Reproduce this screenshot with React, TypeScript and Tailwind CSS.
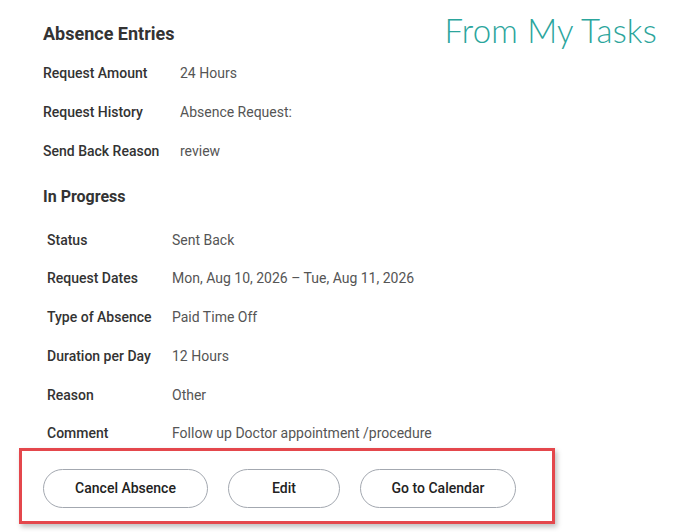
import React from "react";

const entries = [
  { label: "Request Amount", value: "24 Hours" },
  { label: "Request History", value: "Absence Request:" },
  { label: "Send Back Reason", value: "review" },
];

const progress = [
  { label: "Status", value: "Sent Back" },
  { label: "Request Dates", value: "Mon, Aug 10, 2026 – Tue, Aug 11, 2026" },
  { label: "Type of Absence", value: "Paid Time Off" },
  { label: "Duration per Day", value: "12 Hours" },
  { label: "Reason", value: "Other" },
  { label: "Comment", value: "Follow up Doctor appointment /procedure" },
];

export default function App() {
  return (
    <div className="w-[683px] h-[532px] bg-white overflow-hidden font-['Roboto',sans-serif] text-[#333]">
      <div className="flex justify-between pl-[43px] pr-[26px] pt-[20px]">
        <h2 className="text-[18px] font-bold mt-[4px] leading-[20px]">Absence Entries</h2>
        <p className="text-[33px] leading-[24px] mt-[-2px] text-[#2ba59c] font-['Lato',sans-serif] font-light tracking-[0.2px]">
          From My Tasks
        </p>
      </div>

      <div className="pl-[43px] pt-[21px] flex flex-col gap-[23px]">
        {entries.map((e) => (
          <div key={e.label} className="flex items-center h-[16px]">
            <span className="w-[137px] text-[14px] font-medium">{e.label}</span>
            <span className="text-[14px] text-[#555]">{e.value}</span>
          </div>
        ))}
      </div>

      <h2 className="pl-[43px] mt-[28px] text-[16px] font-bold leading-[20px]">In Progress</h2>

      <div className="pl-[47px] pt-[25px] flex flex-col gap-[22.8px]">
        {progress.map((e) => (
          <div key={e.label} className="flex items-center h-[16px]">
            <span className="w-[125px] text-[14px] font-medium">{e.label}</span>
            <span className="text-[14px] text-[#555]">{e.value}</span>
          </div>
        ))}
      </div>

      <div className="ml-[19px] mt-[6px] w-[536px] h-[76px] border-[3px] border-[#e4474c] shadow-[2px_3px_5px_rgba(0,0,0,0.25)] flex items-start gap-[20px] pl-[21px] pt-[18px]">
        <button className="w-[165px] h-[39px] rounded-full border border-[#a3a8b0] text-[14px] font-medium text-[#222]">
          Cancel Absence
        </button>
        <button className="w-[112px] h-[39px] rounded-full border border-[#a3a8b0] text-[14px] font-medium text-[#222]">
          Edit
        </button>
        <button className="w-[156px] h-[39px] rounded-full border border-[#a3a8b0] text-[14px] font-medium text-[#222]">
          Go to Calendar
        </button>
      </div>
    </div>
  );
}
